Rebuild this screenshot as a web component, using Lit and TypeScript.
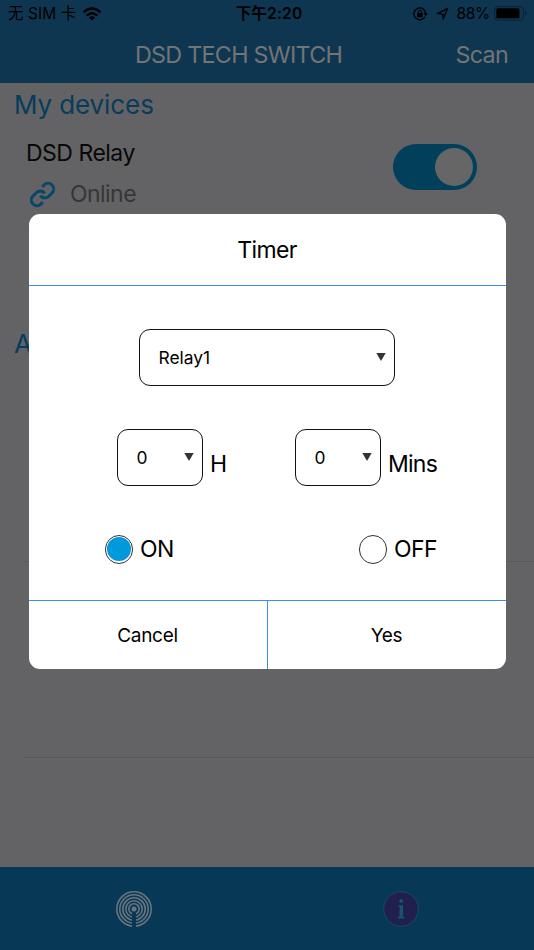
import { LitElement, html, css, svg } from "lit";
import { customElement, property } from "lit/decorators.js";

@customElement("status-bar")
class StatusBar extends LitElement {
  static styles = css`
    :host { display: grid; grid-template-columns: 1fr auto 1fr; align-items: center; height: 27px; padding: 0 7px 0 8px; color: #000; font: 16px/27px Inter, "Noto Sans CJK SC", sans-serif; }
    .side { display: flex; align-items: center; height: 27px; }
    .carrier { letter-spacing: .05px; white-space: pre; font-size: 15.5px; }
    .wifi { margin-left: 6px; }
    .right { justify-content: flex-end; }
    .time { font-weight: 600; font-size: 15.5px; letter-spacing: .2px; padding-left: 3px; }
    .lock { margin-right: 8px; }
    .arrow { margin-right: 8px; }
    .pct { margin-right: 4px; letter-spacing: -.3px; font-size: 15.5px; }
  `;
  render() {
    return html`
      <div class="side">
        <span class="carrier">无 SIM 卡</span>
        <svg class="wifi" width="20" height="14" viewBox="0 0 20 14">
          <g fill="none" stroke="#000" stroke-width="2.5"><path d="M1.6 5.3Q10-2.2 18.4 5.3"/><path d="M4.7 8.6Q10 4 15.3 8.6"/></g>
          <path d="M6.9 10.4Q10 8 13.1 10.4L10 13.5Z"/>
        </svg>
      </div>
      <span class="time">下午2:20</span>
      <div class="side right">
        <svg class="lock" width="15" height="14" viewBox="0 0 15 14">
          <path d="M12 9.7A5.9 5.9 0 1 1 12.7 6.5" fill="none" stroke="#000" stroke-width="1.3"/>
          <path d="M10.4 6h4.4l-2.2 3.2Z"/><rect x="4" y="6" width="5.6" height="4.3" rx=".6"/>
          <path d="M5.2 6.2V4.9a1.6 1.6 0 0 1 3.2 0v1.3" fill="none" stroke="#000" stroke-width="1"/>
        </svg>
        <svg class="arrow" width="13" height="13" viewBox="0 0 13 13"><path d="M1.4 6.7 11.7 1.3 7.2 11.8 6.6 6.9Z" fill="none" stroke="#000" stroke-width="1.35" stroke-linejoin="round"/></svg>
        <span class="pct">88%</span>
        <svg width="33" height="15" viewBox="0 0 33 15">
          <rect x=".6" y=".6" width="29" height="13.4" rx="3.6" fill="none" stroke="#092437" stroke-width="1.2"/>
          <rect x="2.3" y="2.3" width="23.2" height="10" rx="1.5"/><path d="M31 5.2q1.5.5 1.5 2.1T31 9.4Z" fill="#06202f"/>
        </svg>
      </div>`;
  }
}

@customElement("select-box")
class SelectBox extends LitElement {
  @property() value = "";
  static styles = css`
    :host { box-sizing: border-box; display: flex; align-items: center; justify-content: space-between; height: 57px; padding: 0 8px 0 18.5px; border: 1.4px solid #111; border-radius: 11px; font-size: 17.4px; }
  `;
  render() {
    return html`<span>${this.value}</span><svg width="10" height="8" viewBox="0 0 10 8"><path d="M.3 0h9.4L5 8Z" fill="#333"/></svg>`;
  }
}

@customElement("timer-dialog")
class TimerDialog extends LitElement {
  static styles = css`
    :host { box-sizing: border-box; display: flex; flex-direction: column; width: 477px; height: 455.5px; background: #fff; border-radius: 11px; overflow: hidden; color: #000; }
    .title { height: 71px; border-bottom: 1.4px solid #3d8fe8; text-align: center; font-size: 23px; line-height: 72px; letter-spacing: -.65px; }
    .body { flex: 1; display: flex; flex-direction: column; padding-top: 43px; }
    .relay { width: 256px; align-self: center; }
    .times { display: flex; margin: 43px 0 0 88.5px; }
    .unit { display: flex; align-items: flex-end; width: 178px; }
    .unit select-box { width: 86px; }
    .label { font-size: 23px; line-height: 28px; margin: 0 0 8px 7px; letter-spacing: -.75px; }
    .choices { display: flex; margin: 49px 0 0 76px; }
    .choice { display: flex; flex: none; align-items: center; width: 254px; height: 29px; font-size: 23px; line-height: 30px; }
    .choice:last-child { width: auto; }
    .name { margin-left: 7px; letter-spacing: -.6px; }
    .radio { box-sizing: border-box; width: 28.5px; height: 28.5px; border: 1.2px solid #333; border-radius: 50%; background: #fff; padding: 1.3px; }
    .dot { width: 100%; height: 100%; border-radius: 50%; background: #0299dc; }
    .actions { display: flex; height: 68.5px; border-top: 1.4px solid #3d8fe8; font-size: 19px; line-height: 69px; letter-spacing: -.3px; text-align: center; }
    .action { flex: 1; }
    .action + .action { border-left: 1.4px solid #3d8fe8; }
  `;
  render() {
    return html`
      <div class="title">Timer</div>
      <div class="body">
        <select-box class="relay" value="Relay1"></select-box>
        <div class="times">
          ${["H", "Mins"].map((u) => html`<div class="unit"><select-box value="0"></select-box><span class="label">${u}</span></div>`)}
        </div>
        <div class="choices">
          <div class="choice"><div class="radio"><div class="dot"></div></div><span class="name">ON</span></div>
          <div class="choice"><div class="radio"></div><span class="name">OFF</span></div>
        </div>
      </div>
      <div class="actions"><div class="action">Cancel</div><div class="action">Yes</div></div>`;
  }
}

@customElement("app-root")
class AppRoot extends LitElement {
  static styles = css`
    :host { display: flex; flex-direction: column; position: relative; width: 534px; height: 950px; overflow: hidden; background: #636365; font-family: Inter, "Noto Sans CJK SC", sans-serif; }
    .top { height: 83px; background: #0f3650; }
    .nav { display: flex; justify-content: space-between; align-items: center; height: 54px; padding: 0 26px 0 135px; color: #737476; font-size: 23.3px; letter-spacing: -.72px; }
    .content { flex: 1; display: flex; flex-direction: column; }
    .section { height: 44px; padding-left: 14px; line-height: 44px; font-size: 26px; color: #073c5c; letter-spacing: -.1px; }
    .device { display: flex; justify-content: space-between; height: 195px; padding: 0 57px 0 26px; }
    .info { display: flex; flex-direction: column; padding-top: 11px; }
    .device-name { font-size: 23px; line-height: 30px; letter-spacing: -.5px; color: #080808; }
    .state { display: flex; align-items: center; gap: 14px; margin-top: 11px; padding-left: 3px; height: 30px; font-size: 23px; letter-spacing: -.55px; color: #363637; }
    .toggle { box-sizing: border-box; width: 84px; height: 46px; margin-top: 16.6px; padding: 4px; border-radius: 23px; background: #023f5b; display: flex; justify-content: flex-end; }
    .knob { width: 38px; height: 38px; border-radius: 50%; background: #666667; }
    .row { height: 195px; border-bottom: 1px solid #59595b; margin-left: 24px; }
    .tabs { display: flex; height: 83px; background: #073957; }
    .tab { flex: 1; display: flex; align-items: center; justify-content: center; }
    timer-dialog { position: absolute; left: 28.5px; top: 213.8px; }
  `;
  render() {
    return html`
      <div class="top">
        <status-bar></status-bar>
        <div class="nav"><span>DSD TECH SWITCH</span><span>Scan</span></div>
      </div>
      <div class="content">
        <div class="section">My devices</div>
        <div class="device">
          <div class="info">
            <div class="device-name">DSD Relay</div>
            <div class="state">
              <svg width="27" height="27" viewBox="0 0 24 24" fill="none" stroke="#0a4668" stroke-width="2.7">
                <path d="M10 13a5 5 0 0 0 7.54.54l3-3a5 5 0 0 0-7.07-7.07l-1.72 1.71"/>
                <path d="M14 11a5 5 0 0 0-7.54-.54l-3 3a5 5 0 0 0 7.07 7.07l1.71-1.71"/>
              </svg>
              <span>Online</span>
            </div>
          </div>
          <div class="toggle"><div class="knob"></div></div>
        </div>
        <div class="section">A</div>
        <div class="row"></div>
        <div class="row"></div>
      </div>
      <div class="tabs">
        <div class="tab">
          <svg width="38" height="38" viewBox="0 0 38 38">
            <g fill="none" stroke="#69747b" stroke-width="1.6">${[5.2, 8.2, 11.2, 14.2, 17.2].map((r) => svg`<circle cx="19" cy="19" r="${r}"/>`)}</g>
            <path d="M17 19h4v19h-4Z" fill="#073957"/><circle cx="19" cy="19" r="2.5" fill="#69747b"/>
          </svg>
        </div>
        <div class="tab">
          <svg width="38" height="38" viewBox="0 0 38 38">
            <circle cx="19" cy="19" r="17.3" fill="#20204f" stroke="#184867" stroke-width="1"/>
            <g fill="#195269"><circle cx="19.2" cy="10.9" r="2"/><path d="M16 15.2h5v11.9h1.4v1.4H16v-1.4h1.5V16.6H16Z"/></g>
          </svg>
        </div>
      </div>
      <timer-dialog></timer-dialog>`;
  }
}
